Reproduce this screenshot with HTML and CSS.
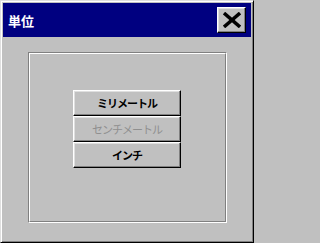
FILE: index.html
```html
<!DOCTYPE html>
<html lang="ja">
<head>
<meta charset="utf-8">
<title>単位</title>
<link rel="stylesheet" href="styles.css">
</head>
<body>
<div class="window">
  <div class="titlebar">
    <span class="title">単位</span>
    <div class="close">
      <svg width="18" height="16" viewBox="0 0 18 16">
        <line x1="1" y1="1" x2="17" y2="15" stroke="#000" stroke-width="3.4"/>
        <line x1="17" y1="1" x2="1" y2="15" stroke="#000" stroke-width="3.4"/>
      </svg>
    </div>
  </div>
  <div class="content">
    <div class="frame">
      <div class="frame-inner">
        <div class="buttons">
          <div class="btn">ミリメートル</div>
          <div class="btn disabled">センチメートル</div>
          <div class="btn">インチ</div>
        </div>
      </div>
    </div>
  </div>
</div>
</body>
</html>
```
FILE: styles.css
```css
html, body {
  margin: 0;
  padding: 0;
  background: #c0c0c0;
}
.window {
  width: 254px;
  height: 243px;
  box-sizing: border-box;
  background: #c0c0c0;
  border: 1px solid;
  border-color: #dfdfdf #000 #000 #dfdfdf;
  box-shadow: inset 1px 1px 0 #fff, inset -1px -1px 0 #808080;
  padding: 2px;
  display: flex;
  flex-direction: column;
}
.window > * { flex: none; }
.titlebar {
  height: 34px;
  background: #000080;
  display: flex;
  align-items: center;
  justify-content: space-between;
  padding: 0 5px 0 5px;
}
.title {
  color: #fff;
  font-family: "Noto Sans CJK JP", sans-serif;
  font-weight: bold;
  font-size: 13px;
  line-height: 1;
  margin-top: 1px;
}
.close {
  width: 29px;
  height: 26px;
  box-sizing: border-box;
  background: #c0c0c0;
  border: 1px solid;
  border-color: #fff #000 #000 #fff;
  box-shadow: inset -1px -1px 0 #808080, inset 1px 1px 0 #dfdfdf;
  display: flex;
  align-items: center;
  justify-content: center;
}
.close svg { display: block; margin-left: 1px; }
.content {
  flex: 1;
  padding: 15px 24px 0 25px;
}
.frame {
  width: 199px;
  height: 171px;
  box-sizing: border-box;
  border: 1px solid;
  border-color: #808080 #fff #fff #808080;
}
.frame-inner {
  height: 100%;
  box-sizing: border-box;
  border: 1px solid;
  border-color: #fff #808080 #808080 #fff;
  display: flex;
  justify-content: center;
  padding-top: 36px;
}
.buttons {
  width: 108px;
  display: flex;
  flex-direction: column;
  margin-left: -1px;
}
.btn {
  height: 26px;
  box-sizing: border-box;
  border: 1px solid;
  border-color: #fff #000 #000 #fff;
  box-shadow: inset -1px -1px 0 #808080, inset 1px 1px 0 #dfdfdf;
  background: #c0c0c0;
  display: flex;
  align-items: center;
  justify-content: center;
  font-family: "Noto Sans CJK JP", sans-serif;
  font-weight: bold;
  font-size: 11px;
  letter-spacing: -1px;
  color: #000;
}
.btn.disabled {
  color: #8f8f8f;
  font-weight: normal;
}
```
